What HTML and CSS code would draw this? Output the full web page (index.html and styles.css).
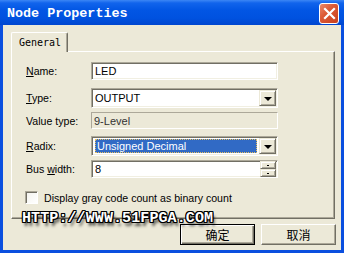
FILE: index.html
```html
<!DOCTYPE html>
<html lang="en">
<head>
    <meta charset="UTF-8">
    <title>Node Properties</title>
    <link rel="stylesheet" href="styles.css">
</head>
<body>
    <div class="window">
        <div class="titlebar">
            <span class="title">Node Properties</span>
            <span class="close">
                <svg width="13" height="13" viewBox="0 0 13 13">
                    <path d="M2 2 L11 11 M11 2 L2 11" stroke="#fff" stroke-width="2.2" stroke-linecap="square"/>
                </svg>
            </span>
        </div>
        <div class="client">
            <div class="tabs">
                <div class="tab">General</div>
            </div>
            <div class="panel">
                <div class="row row-name">
                    <label><u>N</u>ame:</label>
                    <div class="field edit"><span class="value">LED</span></div>
                </div>
                <div class="row row-type">
                    <label><u>T</u>ype:</label>
                    <div class="field combo">
                        <span class="value">OUTPUT</span>
                        <span class="drop"><i class="arrow"></i></span>
                    </div>
                </div>
                <div class="row row-static">
                    <label>Value type:</label>
                    <div class="field static"><span class="value">9-Level</span></div>
                </div>
                <div class="row row-radix">
                    <label><u>R</u>adix:</label>
                    <div class="field combo">
                        <span class="value selected"><span>Unsigned Decimal</span></span>
                        <span class="drop"><i class="arrow"></i></span>
                    </div>
                </div>
                <div class="row row-bus">
                    <label>Bus <u>w</u>idth:</label>
                    <div class="field edit spin">
                        <span class="value">8</span>
                        <span class="spinners">
                            <span class="spin-btn"><i></i></span>
                            <span class="spin-btn"><i></i></span>
                        </span>
                    </div>
                </div>
                <div class="check-row">
                    <span class="checkbox"></span>
                    <span>Display gray code count as binary count</span>
                </div>
            </div>
            <div class="watermark">HTTP://WWW.51FPGA.COM</div>
            <div class="buttons">
                <button class="btn default">确定</button>
                <button class="btn">取消</button>
            </div>
        </div>
    </div>
</body>
</html>
```

FILE: styles.css
```css
:root {
    --face: #ece9d8;
    --light: #ffffff;
    --shadow: #aca899;
    --dark: #716f64;
    --frame: #0a4fdf;
}

* {
    margin: 0;
    padding: 0;
    box-sizing: border-box;
}

body {
    width: 344px;
    height: 253px;
    overflow: hidden;
    font-family: "Liberation Sans", Arial, sans-serif;
    font-size: 10.6px;
    color: #000;
}

.window {
    width: 344px;
    height: 253px;
    display: flex;
    flex-direction: column;
}

/* title bar */
.titlebar {
    height: 25px;
    flex: none;
    display: flex;
    align-items: center;
    justify-content: space-between;
    padding: 0 5px 0 7px;
    background: linear-gradient(#3c86f5 0, #1164ec 3px, #0256e4 10px, #0052e0 18px, #0046cf 25px);
}

.title {
    font-family: "Liberation Mono", "Courier New", monospace;
    font-weight: bold;
    font-size: 13.4px;
    color: #fff;
    margin-top: 1px;
}

.close {
    width: 20px;
    height: 21px;
    margin-top: 1px;
    border: 1px solid #fff;
    border-radius: 3px;
    background: linear-gradient(135deg, #ec8a6c 0, #dc5a36 40%, #c8401e 100%);
    display: flex;
    align-items: center;
    justify-content: center;
}

/* client area */
.client {
    flex: 1;
    position: relative;
    background: var(--face);
    border: 3px solid var(--frame);
    border-top: 0;
    padding: 7px 6px 0 8px;
    display: flex;
    flex-direction: column;
}

.tabs {
    display: flex;
    height: 19px;
    position: relative;
    z-index: 1;
}

.tab {
    width: 57px;
    height: 20px;
    padding: 4px 0 0 7px;
    font-family: "DejaVu Sans Mono", "Liberation Mono", monospace;
    font-size: 10px;
    background: var(--face);
    border-top: 1px solid var(--light);
    border-left: 1px solid var(--light);
    border-right: 1px solid var(--dark);
    box-shadow: inset -1px 0 var(--shadow);
    border-radius: 2px 2px 0 0;
}

.panel {
    height: 168px;
    border-top: 1px solid var(--light);
    border-left: 1px solid var(--light);
    border-right: 1px solid var(--dark);
    border-bottom: 1px solid var(--dark);
    box-shadow: inset -1px -1px var(--shadow);
    padding: 10px 0 0 14px;
    display: flex;
    flex-direction: column;
}

.row {
    display: flex;
    align-items: center;
}

.row label {
    width: 65px;
    flex: none;
}

.row-type { margin-top: 8px; }
.row-static { margin-top: 4px; }
.row-radix { margin-top: 7px; }
.row-bus { margin-top: 4px; }

/* fields */
.field {
    width: 187px;
    display: flex;
    align-items: center;
    background: var(--light);
    border-top: 1px solid var(--shadow);
    border-left: 1px solid var(--shadow);
    border-right: 1px solid var(--light);
    border-bottom: 1px solid var(--light);
    box-shadow: inset 1px 1px var(--dark), inset -1px -1px #f1efe2;
    font-size: 11px;
}

.field .value {
    flex: 1;
    padding-left: 3px;
}

.edit {
    height: 18px;
}

.combo {
    height: 20px;
    padding: 2px 1px 2px 2px;
}

.combo .value {
    padding-left: 1px;
}

.static {
    height: 17px;
    background: var(--face);
    box-shadow: none;
}

.static .value {
    color: #333;
    padding-left: 2px;
}

.selected {
    height: 16px;
    margin-right: 1px;
    padding: 1px !important;
    display: flex;
}

.selected span {
    flex: 1;
    background: #316ac5;
    color: #fff;
    outline: 1px dotted #e8c060;
    outline-offset: -1px;
    border: 1px dotted #000;
    padding-left: 1px;
    line-height: 12px;
}

.drop, .spin-btn {
    flex: none;
    background: var(--face);
    border-top: 1px solid var(--face);
    border-left: 1px solid var(--face);
    border-right: 1px solid var(--dark);
    border-bottom: 1px solid var(--dark);
    box-shadow: inset 1px 1px var(--light), inset -1px -1px var(--shadow);
    display: flex;
    align-items: center;
    justify-content: center;
}

.drop {
    width: 17px;
    height: 16px;
}

.arrow {
    width: 0;
    height: 0;
    border-left: 4px solid transparent;
    border-right: 4px solid transparent;
    border-top: 4px solid #000;
    margin-top: 1px;
}

.spin {
    padding-right: 1px;
}

.spinners {
    display: flex;
    flex-direction: column;
}

.spin-btn {
    width: 16px;
    height: 8px;
}

.spin-btn i {
    width: 2px;
    height: 1px;
    background: #000;
}

/* checkbox */
.check-row {
    display: flex;
    align-items: center;
    margin-top: 13px;
    margin-left: -1px;
}

.checkbox {
    width: 13px;
    height: 13px;
    margin-right: 6px;
    background: linear-gradient(135deg, #f4f3ee, #fff);
    border-top: 1px solid var(--shadow);
    border-left: 1px solid var(--shadow);
    border-right: 1px solid var(--light);
    border-bottom: 1px solid var(--light);
    box-shadow: inset 1px 1px var(--dark);
}

/* watermark over the panel edge */
.watermark {
    position: absolute;
    left: 19px;
    top: 185px;
    font-family: "Liberation Mono", monospace;
    font-weight: bold;
    font-size: 15px;
    letter-spacing: 0.1px;
    color: #fff;
    text-shadow:
        1px 0 #000, -1px 0 #000, 0 1px #000, 0 -1px #000,
        1px 1px #000, -1px -1px #000, 1px -1px #000, -1px 1px #000,
        2px 4px 3px rgba(0, 0, 0, 0.7);
}

/* dialog buttons */
.buttons {
    display: flex;
    justify-content: flex-end;
    gap: 6px;
    margin-top: 5px;
    margin-right: -1px;
}

.btn {
    width: 75px;
    height: 21px;
    font-family: "Noto Sans CJK SC", sans-serif;
    font-size: 12px;
    line-height: 1;
    background: var(--face);
    border-top: 1px solid var(--light);
    border-left: 1px solid var(--light);
    border-right: 1px solid var(--dark);
    border-bottom: 1px solid var(--dark);
    box-shadow: inset -1px -1px var(--shadow);
    color: #000;
}

.btn.default {
    border: 1px solid #000;
    box-shadow: inset 1px 1px var(--light), inset -1px -1px var(--dark), inset -2px -2px var(--shadow);
}
```
